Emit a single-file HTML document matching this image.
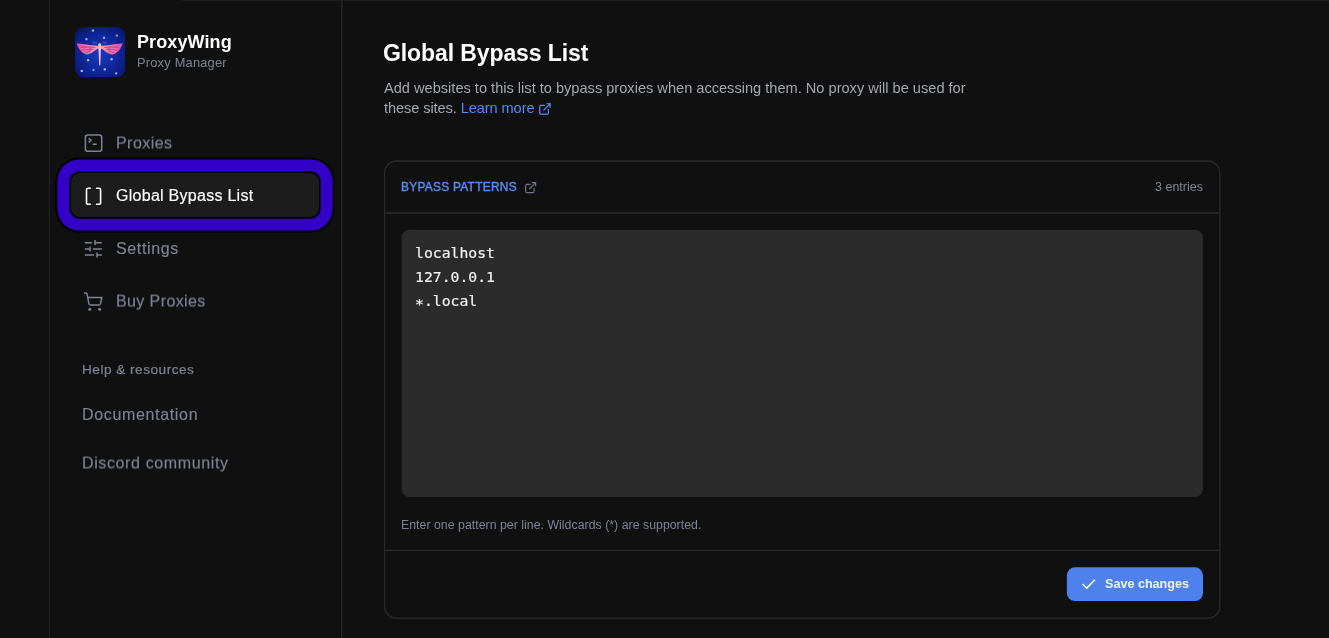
<!DOCTYPE html>
<html lang="en">
<head>
<meta charset="utf-8">
<title>ProxyWing - Global Bypass List</title>
<style>
*{box-sizing:border-box;margin:0;padding:0}
html,body{width:1329px;height:638px;overflow:hidden;background:#101010}
body{font-family:"Liberation Sans",Arial,sans-serif;color:#fff;position:relative}
.abs{position:absolute}
.t{position:absolute;white-space:nowrap;line-height:1;will-change:transform}
.muted{color:#7d8394}
.logo{left:74.5px;top:26.5px;width:50.5px;height:50.5px}
.brand{left:136.8px;top:32.8px;font-size:18px;letter-spacing:.1px;font-weight:700;color:#fff}
.brand2{left:136.6px;top:57.1px;font-size:12.8px;letter-spacing:.23px;color:#7d8394}
.nav{font-size:16px;letter-spacing:.42px;left:116px;-webkit-text-stroke:.15px currentColor}
.sel{left:71px;top:172.5px;width:248.2px;height:44.5px;border-radius:9px;background:#1c1c1c;
 box-shadow:0 0 0 1.8px #000,0 0 0 13.6px #3300c8,0 0 0 15.6px #000}
.h1{left:383px;top:41.6px;font-size:23px;letter-spacing:-.1px;font-weight:700;color:#fff}
.desc{left:384px;font-size:14.6px;color:#a3a6b3}
.link{color:#4d8df6}
.lbl{left:401px;top:182px;font-size:11.9px;font-weight:400;-webkit-text-stroke:.4px currentColor;letter-spacing:.28px;color:#558df0}
.cnt{right:126.5px;top:180.7px;font-size:12.5px;color:#7d8394}
.mono{font-family:"DejaVu Sans Mono","Liberation Mono",monospace;font-size:14.75px;color:#f3f3f3;left:415px;-webkit-text-stroke:.18px currentColor}
.help{left:401.3px;top:519.2px;font-size:12.3px;letter-spacing:.03px;color:#7d8394}
.btnt{left:1104.8px;top:577.5px;font-size:12.6px;font-weight:700;color:#eef3ff}
</style>
</head>
<body>

<svg class="abs" style="left:0;top:0" width="1329" height="638" viewBox="0 0 1329 638">
 <rect x="181" y="0" width="1148" height="1.2" fill="#1c1c1c"/>
 <path d="M49.4 0V638" stroke="#1e1e1e" stroke-width="1.4"/>
 <path d="M341.8 0V638" stroke="#272727" stroke-width="1.4"/>
 <rect x="384.6" y="161" width="835.25" height="457.2" rx="12" fill="none" stroke="#2b2b2b" stroke-width="1.3"/>
 <path d="M384.6 213H1219.85M384.6 550.4H1219.85" stroke="#2b2b2b" stroke-width="1.3"/>
 <rect x="401.6" y="229.7" width="801.3" height="267.4" rx="8" fill="#2b2b2b"/>
 <rect x="1066.3" y="567" width="137" height="35.2" rx="8.5" fill="#090909"/>
 <rect x="1066.8" y="567.3" width="136.2" height="33.8" rx="8" fill="#4e81ec"/>
</svg>
<!-- logo -->
<svg class="abs logo" viewBox="0 0 50 50">
 <defs>
  <radialGradient id="lg" cx="50%" cy="52%" r="62%">
   <stop offset="0" stop-color="#183ac2"/><stop offset="0.5" stop-color="#11299f"/><stop offset="1" stop-color="#0a1874"/>
  </radialGradient>
  <linearGradient id="wl" x1="0" x2="1" y1="0" y2="0"><stop offset="0" stop-color="#c44fd0"/><stop offset="0.25" stop-color="#fb5a9e"/><stop offset="0.7" stop-color="#fd7fa8"/><stop offset="1" stop-color="#f9a5c0"/></linearGradient>
  <linearGradient id="wr" x1="1" x2="0" y1="0" y2="0"><stop offset="0" stop-color="#c44fd0"/><stop offset="0.25" stop-color="#fb5a9e"/><stop offset="0.7" stop-color="#fd7fa8"/><stop offset="1" stop-color="#f9a5c0"/></linearGradient>
  <filter id="gl" x="-100%" y="-100%" width="300%" height="300%"><feGaussianBlur stdDeviation="0.45"/></filter>
 </defs>
 <rect width="50" height="50" rx="9.5" fill="url(#lg)"/>
 <g transform="translate(-0.7,-0.55)">
 <g fill="#8fd0ff" opacity=".32" filter="url(#gl)">
  <rect x="17.2" y="2.8" width="2.4" height="2.4"/><rect x="10.7" y="11.4" width="2.4" height="2.4"/><rect x="28.2" y="9.9" width="2.4" height="2.4"/><rect x="40.9" y="7.8" width="2.4" height="2.4"/>
  <rect x="12.4" y="32.1" width="2.4" height="2.4"/><rect x="35.6" y="31.2" width="2.4" height="2.4"/><rect x="6.1" y="42.8" width="2.4" height="2.4"/><rect x="17.7" y="41.9" width="2.4" height="2.4"/>
  <rect x="28.9" y="41.2" width="2.4" height="2.4"/><rect x="40.2" y="45.2" width="2.4" height="2.4"/>
 </g>
 <g fill="#d0e8ff" opacity=".85" transform="translate(.12,.12)">
  <rect x="17.6" y="3.2" width="1.6" height="1.6"/><rect x="11.1" y="11.8" width="1.6" height="1.6"/><rect x="28.6" y="10.3" width="1.6" height="1.6"/><rect x="41.4" y="8.3" width="1.4" height="1.4" opacity=".8"/>
  <rect x="12.7" y="32.4" width="1.8" height="1.8"/><rect x="35.9" y="31.5" width="1.8" height="1.8"/><rect x="6.4" y="43.1" width="1.8" height="1.8"/><rect x="18.2" y="42.4" width="1.4" height="1.4" opacity=".8"/>
  <rect x="29.2" y="41.5" width="1.8" height="1.8"/><rect x="40.6" y="45.6" width="1.6" height="1.6" opacity=".85"/>
 </g>
 <path d="M2.2 16.7 C6 17 14 18.4 24.2 19.3 L24.2 21.6 C21.5 22.6 18.5 26.4 13.5 27.7 C9.5 28.4 4.6 23.6 2.2 16.7 Z" fill="url(#wl)"/>
 <path d="M48.1 16.7 C44.3 17 36.3 18.4 26.1 19.3 L26.1 21.6 C28.8 22.6 31.8 26.4 36.8 27.7 C40.8 28.4 45.7 23.6 48.1 16.7 Z" fill="url(#wr)"/>
 <g stroke="#1a2fa0" stroke-width=".55" opacity=".75" fill="none">
  <path d="M6.5 20.6 L15 20.4 L21 21M8 23.6 L14.5 22.6 L19 22.8M11 26 L16.5 24.4M14.5 20.6l2.2 1.7-2.2 1.5"/>
  <path d="M43.8 20.6 L35.3 20.4 L29.3 21M42.3 23.6 L35.8 22.6 L31.3 22.8M39.3 26 L33.8 24.4M35.8 20.6l-2.2 1.7 2.2 1.5"/>
 </g>
 <path d="M18 16.2h4.5M27.8 16.2h4.5" stroke="#c9a0e8" stroke-width=".5" opacity=".7"/>
 <path d="M25.15 16.6 c1.1 0 1.5 .9 1.5 2 L26.1 27 L25.7 38.4 h-1.1 L24.2 27 L23.65 18.6 c0-1.1 .4-2 1.5-2z" fill="#ffc9da"/>
 <g stroke="#e58ab8" stroke-width=".45" opacity=".8"><path d="M23.8 20.4h2.7M23.9 22.6h2.5M24 24.8h2.3M24.1 27h2.1M24.2 29.2h1.9M24.3 31.4h1.7M24.4 33.6h1.5M24.5 35.8h1.3"/></g>
</g>
</svg>


<div class="abs sel"></div>
<!-- nav icons -->
<svg class="abs" style="left:80px;top:130px" width="28" height="28" viewBox="80 130 28 28" fill="none" stroke="#7d8394" stroke-width="1.5" stroke-linecap="round" stroke-linejoin="round">
 <rect x="85.4" y="134.9" width="16.3" height="16.4" rx="2.4"/>
 <path d="M88.6 138.4l2.5 2-2.5 2M92.6 144.2h4.1" stroke-width="1.35" stroke-linecap="butt"/>
</svg>
<svg class="abs" style="left:80px;top:182px" width="28" height="28" viewBox="80 182 28 28" fill="none" stroke="#fff" stroke-width="1.6" stroke-linecap="round" stroke-linejoin="round">
 <path d="M90.3 188.2h-2.3a1.5 1.5 0 0 0-1.5 1.5v13.1a1.5 1.5 0 0 0 1.5 1.5h2.3M96.6 188.2h2.5a1.5 1.5 0 0 1 1.5 1.5v13.1a1.5 1.5 0 0 1-1.5 1.5h-2.5"/>
</svg>
<svg class="abs" style="left:80px;top:234px" width="28" height="28" viewBox="80 234 28 28" fill="none" stroke="#7d8394" stroke-width="1.5" stroke-linecap="butt">
 <path d="M84.8 242.7h7.3M95 240.1v5M95 242.7h6.9M84.8 248.9h5.2M90 246.4v5M92.8 248.9h9.1M84.8 254.9h9.2M97 252.4v5M97 254.9h4.9"/>
</svg>
<svg class="abs" style="left:78px;top:284px" width="32" height="32" viewBox="78 284 32 32" fill="none" stroke="#7d8394" stroke-width="1.5" stroke-linecap="round" stroke-linejoin="round">
 <path d="M84.5 292.9h1.4a1.2 1.2 0 0 1 1.1.9l1.9 9.9a1.5 1.5 0 0 0 1.5 1.2h8.6a1.5 1.5 0 0 0 1.5-1.2l1.3-6.2H87.9"/>
 <circle cx="89.8" cy="309.3" r="1.55" fill="#7d8394" stroke="none"/>
 <circle cx="99.6" cy="309.3" r="1.55" fill="#7d8394" stroke="none"/>
</svg>

<div class="t brand">ProxyWing</div>
<div class="t brand2">Proxy Manager</div>

<div class="t nav muted" style="top:135.4px;letter-spacing:.45px;transform:rotate(.002deg) translateY(.5px)">Proxies</div>
<div class="t nav" style="top:187.8px;color:#fff;letter-spacing:.27px;left:116.3px">Global Bypass List</div>
<div class="t nav muted" style="top:240.8px;letter-spacing:.63px">Settings</div>
<div class="t nav muted" style="top:293px;letter-spacing:.4px;transform:rotate(.002deg) translateY(.6px)">Buy Proxies</div>

<div class="t muted" style="left:82.1px;top:362.8px;font-size:13.7px;letter-spacing:.46px;-webkit-text-stroke:.2px currentColor">Help &amp; resources</div>
<div class="t nav muted" style="left:82px;top:407.4px;letter-spacing:.66px">Documentation</div>
<div class="t nav muted" style="left:82px;top:454.8px;letter-spacing:.62px;transform:rotate(.002deg) translateY(.5px)">Discord community</div>

<div class="t h1">Global Bypass List</div>
<div class="t desc" style="top:81px">Add websites to this list to bypass proxies when accessing them. No proxy will be used for</div>
<div class="t desc" style="top:100.7px;letter-spacing:-.09px">these sites. <span class="link">Learn more</span></div>

<svg class="abs" style="left:538.1px;top:101.8px" width="13.9" height="13.9" viewBox="0 0 24 24" fill="none" stroke="#4d8df6" stroke-width="2.1" stroke-linecap="round" stroke-linejoin="round"><path d="M15 3h6v6M10 14 21 3M18 13v6a2 2 0 0 1-2 2H5a2 2 0 0 1-2-2V8a2 2 0 0 1 2-2h6"/></svg>
<svg class="abs" style="left:523.7px;top:180.5px" width="13.3" height="13.3" viewBox="0 0 24 24" fill="none" stroke="#71768a" stroke-width="2.0" stroke-linecap="round" stroke-linejoin="round"><path d="M15 3h6v6M10 14 21 3M18 13v6a2 2 0 0 1-2 2H5a2 2 0 0 1-2-2V8a2 2 0 0 1 2-2h6"/></svg>
<div class="t lbl">BYPASS PATTERNS</div>
<div class="t cnt">3 entries</div>
<div class="t mono" style="top:245.8px">localhost</div>
<div class="t mono" style="top:269.7px">127.0.0.1</div>
<div class="t mono" style="top:294.3px"><span style="position:relative;top:3.2px">*</span>.local</div>
<div class="t help">Enter one pattern per line. Wildcards (*) are supported.</div>
<svg class="abs" style="left:1072px;top:570px" width="40" height="30" viewBox="1072 570 40 30" fill="none" stroke="#f4f7ff" stroke-width="1.5" stroke-linecap="butt" stroke-linejoin="miter"><path d="M1082.5 584l4.3 4.1 8.1-8.3"/></svg>
<div class="t btnt">Save changes</div>
</body>
</html>
